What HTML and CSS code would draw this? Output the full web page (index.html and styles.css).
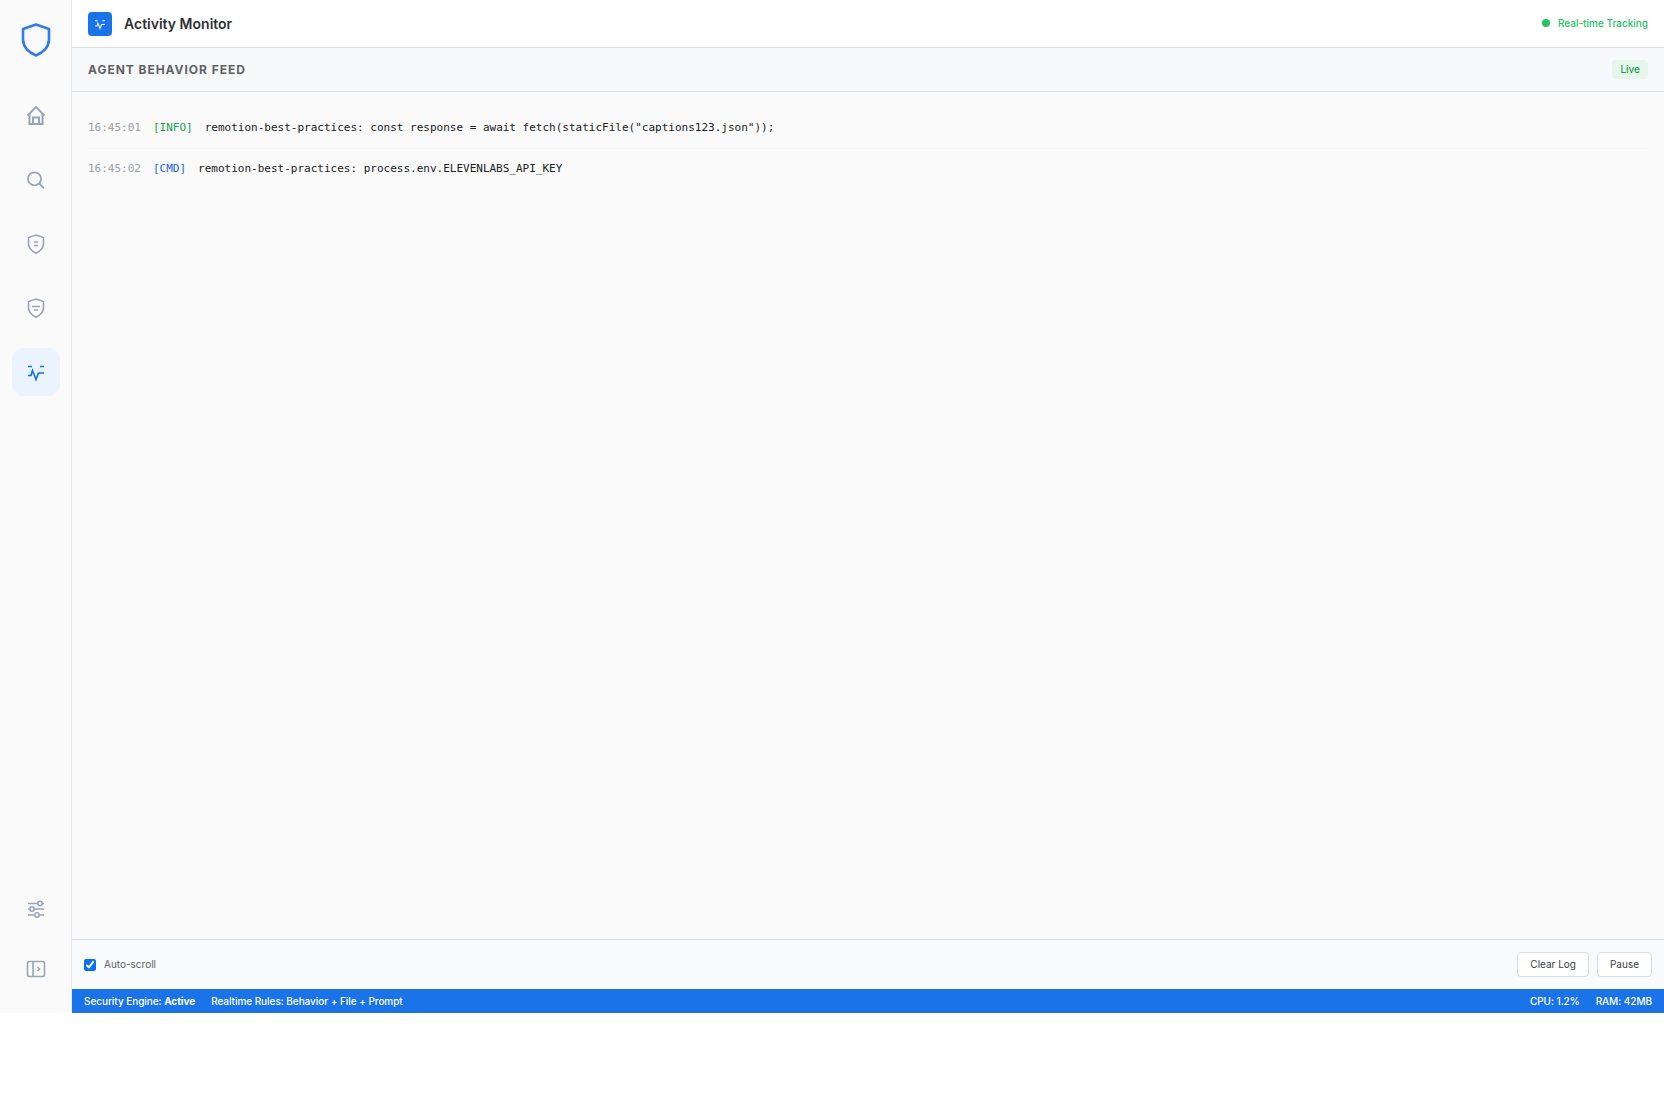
FILE: index.html
```html
<!DOCTYPE html>
<html lang="en">
<head>
<meta charset="utf-8">
<title>Activity Monitor</title>
<link rel="stylesheet" href="styles.css">
</head>
<body>
<div class="app">
  <aside class="sidebar">
    <div class="logo">
      <svg width="32" height="36" viewBox="0 0 32 36" fill="none" stroke="#2f7bf0" stroke-width="2.6" stroke-linejoin="round"><path d="M16 2.5 L29 7 V17 C29 24.5 24 30 16 33.5 C8 30 3 24.5 3 17 V7 Z"/></svg>
    </div>
    <nav class="nav">
      <a class="nav-item"><svg class="ic ic-home" viewBox="0 0 20 20"><path d="M1.500 9.500 10 1 18.500 9.500M3.500 7.500V18H16.500V7.500M7 18V11.500H13V18"/></svg></a>
      <a class="nav-item"><svg class="ic" viewBox="0 0 20 20"><circle cx="8.500" cy="8.800" r="6.500"/><path d="M13.200 13.500 18 18.300"/></svg></a>
      <a class="nav-item"><svg class="ic ic-thin" viewBox="0 0 20 20"><path d="M10 1 17.500 3.500V10C17.500 14 14.500 17 10 19.200 5.500 17 2.500 14 2.500 10V3.500Z"/><path d="M8 8H12M8 11.500H12"/></svg></a>
      <a class="nav-item"><svg class="ic ic-thin" viewBox="0 0 20 20"><path d="M10 1 17.500 3.500V10C17.500 14 14.500 17 10 19.200 5.500 17 2.500 14 2.500 10V3.500Z"/><path d="M6 8.500H14M8 12H12"/></svg></a>
      <a class="nav-item active"><svg class="ic ic-blue" viewBox="0 0 20 20"><path d="M2 4.500H6M14 4.500H18M2 13.500H5L6.500 8.500 10 17.500 12.500 11H18"/></svg></a>
    </nav>
    <div class="nav-bottom">
      <a class="nav-item"><svg class="ic ic-thin" viewBox="0 0 20 20"><path d="M2 4.500H11.500M16.500 4.500H18M2 10H3.500M8.500 10H18M2 16H8.500M13.500 16H18"/><circle cx="14" cy="4.500" r="2.200"/><circle cx="6" cy="10" r="2.200"/><circle cx="11" cy="16" r="2.200"/></svg></a>
      <a class="nav-item"><svg class="ic ic-thin" viewBox="0 0 20 20"><rect x="1.500" y="2.500" width="17" height="15" rx="2"/><path d="M7 2.500V17.500M11.500 8 13.500 10 11.500 12"/></svg></a>
    </div>
  </aside>
  <main class="main">
    <header class="topbar">
      <div class="title-wrap">
        <span class="title-icon"><svg width="12" height="12" viewBox="0 0 20 20" fill="none" stroke="#fff" stroke-width="1.700"><path d="M2 4.500H6M14 4.500H18M2 13.500H5L6.500 8.500 10 17.500 12.500 11H18"/></svg></span>
        <h1 class="title">Activity Monitor</h1>
      </div>
      <div class="tracking"><span class="dot"></span>Real-time Tracking</div>
    </header>
    <section class="feed-head">
      <h2 class="feed-title">AGENT BEHAVIOR FEED</h2>
      <span class="live">Live</span>
    </section>
    <section class="log">
      <div class="row"><span class="time">16:45:01</span><span class="tag info">[INFO]</span><span class="msg">remotion-best-practices: const response = await fetch(staticFile("captions123.json"));</span></div>
      <div class="row"><span class="time">16:45:02</span><span class="tag cmd">[CMD]</span><span class="msg">remotion-best-practices: process.env.ELEVENLABS_API_KEY</span></div>
    </section>
    <section class="controls">
      <label class="auto"><input type="checkbox" checked class="check"><span class="auto-text">Auto-scroll</span></label>
      <div class="buttons">
        <button class="btn">Clear Log</button>
        <button class="btn">Pause</button>
      </div>
    </section>
    <footer class="status">
      <div class="status-group"><span>Security Engine: <b>Active</b></span><span>Realtime Rules: Behavior + File + Prompt</span></div>
      <div class="status-group"><span>CPU: 1.2%</span><span>RAM: 42MB</span></div>
    </footer>
  </main>
</div>
</body>
</html>
```
FILE: styles.css
```css
* { box-sizing: border-box; }
html, body { margin: 0; padding: 0; background: #fff; }
body { font-family: Inter, "Liberation Sans", sans-serif; color: #202124; }
.app { display: flex; height: 1013px; }
.sidebar { width: 72px; flex: none; background: #fafafa; border-right: 1px solid #e8eaed; display: flex; flex-direction: column; align-items: center; }
.logo { height: 80px; display: flex; align-items: center; justify-content: center; }
.nav { display: flex; flex-direction: column; align-items: center; gap: 16px; padding-top: 12px; }
.nav-item { width: 48px; height: 48px; border-radius: 12px; display: flex; align-items: center; justify-content: center; }
.nav-item.active { background: #ebf3ff; }
.nav-bottom { margin-top: auto; display: flex; flex-direction: column; align-items: center; gap: 12px; padding-bottom: 20px; }
.ic { width: 20px; height: 20px; fill: none; stroke: #9aa5b8; stroke-width: 1.800; }
.ic-home { stroke-width: 2; }
.ic-thin { stroke-width: 1.600; }
.ic-blue { stroke: #1a73e8; stroke-width: 1.700; }
.main { flex: 1; min-width: 0; display: flex; flex-direction: column; }
.topbar { height: 48px; flex: none; background: #fff; border-bottom: 1px solid #dadce0; display: flex; align-items: center; justify-content: space-between; padding: 0 16px; }
.title-wrap { display: flex; align-items: center; gap: 12px; }
.title-icon { width: 24px; height: 24px; border-radius: 4px; background: #1a73e8; display: flex; align-items: center; justify-content: center; }
.title { margin: 0; font-size: 14px; font-weight: 600; line-height: 20px; color: #303134; }
.tracking { display: flex; align-items: center; gap: 8px; font-size: 10px; font-weight: 500; line-height: 12px; padding-bottom: 1px; color: #22c55e; }
.dot { width: 8px; height: 8px; border-radius: 50%; background: #22c55e; }
.feed-head { height: 44px; flex: none; background: #f8f9fa; border-bottom: 1px solid #dadce0; display: flex; align-items: center; justify-content: space-between; padding: 0 16px; }
.feed-title { margin: 0; font-size: 12px; font-weight: 700; letter-spacing: 0.96px; color: #5f6368; }
.live { background: #e6f6ec; color: #1e9e4a; font-size: 10px; font-weight: 500; padding: 3px 8px; border-radius: 4px; line-height: 13px; }
.log { flex: 1; background: #fafafa; padding: 16px; font-family: "DejaVu Sans Mono", "Liberation Mono", monospace; font-size: 11px; }
.row { display: flex; padding: 9px 0 10px; line-height: 21px; height: 41px; border-bottom: 1px solid #f1f3f4; }
.row:last-child { border-bottom: 0; }
.time { color: #9aa0a6; margin-right: 12px; }
.tag { margin-right: 12px; }
.info { color: #16a34a; }
.cmd { color: #2563eb; }
.msg { color: #202124; }
.controls { height: 50px; flex: none; background: #f9fafb; border-top: 1px solid #dadce0; display: flex; align-items: center; justify-content: space-between; padding: 0 12px; }
.auto { display: flex; align-items: center; gap: 8px; font-size: 10px; line-height: 12px; color: #5f6368; }
.auto-text { padding-bottom: 1px; }
.check { width: 12px; height: 12px; margin: 0; accent-color: #0b6ff0; }
.buttons { display: flex; gap: 8px; }
.btn { height: 25px; padding: 0 12px 1px; font-family: inherit; font-size: 10px; color: #3c4043; background: #fff; border: 1px solid #dadce0; border-radius: 4px; }
.status { height: 24px; flex: none; background: #1a73e8; color: #fff; font-size: 10px; font-weight: 500; letter-spacing: -0.05px; display: flex; align-items: center; justify-content: space-between; padding: 0 12px; }
.status-group { display: flex; gap: 16px; }
.status b { font-weight: 700; }
```
